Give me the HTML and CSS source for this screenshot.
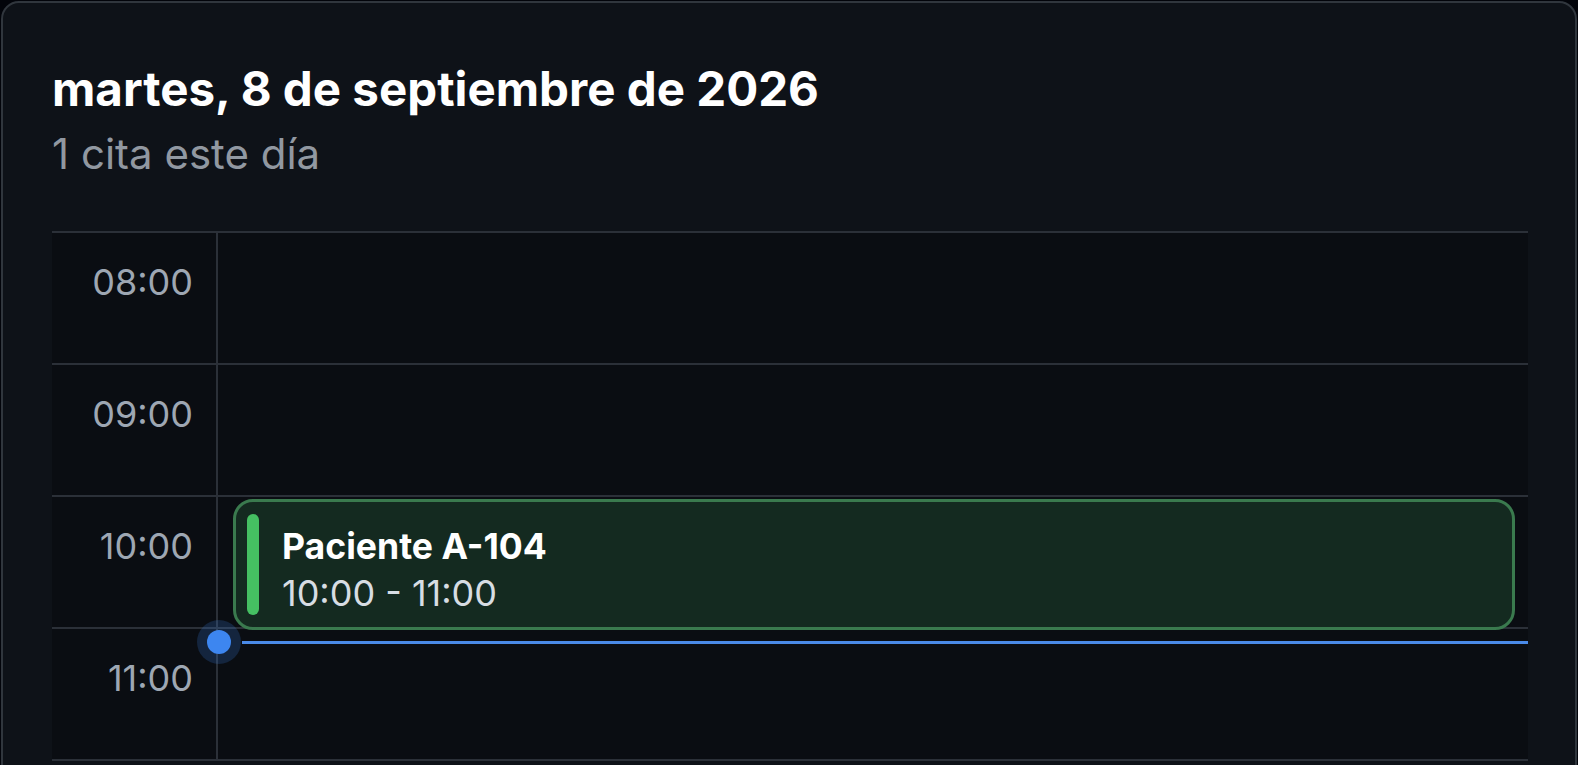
FILE: index.html
```html
<!DOCTYPE html>
<html lang="es">
<head>
  <meta charset="UTF-8">
  <meta name="viewport" content="width=device-width, initial-scale=1.0">
  <title>Agenda del día</title>
  <link rel="stylesheet" href="styles.css">
</head>
<body>
  <div class="card">
    <div class="day-header">
      <h1>martes, 8 de septiembre de 2026</h1>
      <p class="day-count">1 cita este día</p>
    </div>
    <div class="timeline">
      <div class="hour">
        <div class="hour-label">08:00</div>
        <div class="hour-cell"></div>
      </div>
      <div class="hour">
        <div class="hour-label">09:00</div>
        <div class="hour-cell"></div>
      </div>
      <div class="hour">
        <div class="hour-label">10:00</div>
        <div class="hour-cell"></div>
      </div>
      <div class="hour">
        <div class="hour-label">11:00</div>
        <div class="hour-cell"></div>
      </div>
      <div class="track">
        <div class="event" style="top: 266px; height: 131px;">
          <span class="event-bar"></span>
          <div class="event-info">
            <div class="event-title">Paciente A-104</div>
            <div class="event-time">10:00 - 11:00</div>
          </div>
        </div>
        <div class="now-line" style="top: 408px;">
          <span class="now-dot"></span>
        </div>
      </div>
    </div>
  </div>
</body>
</html>
```

FILE: styles.css
```css
* {
  margin: 0;
  padding: 0;
  box-sizing: border-box;
}
body {
  font-family: 'Inter', 'Noto Sans', sans-serif;
  background-color: #02040a;
  color: #f0f6fc;
  overflow: hidden;
}
.card {
  margin: 1px 1px 0 1px;
  min-height: 900px;
  padding: 57px 47px 0 49px;
  background-color: #0e1218;
  border: 2px solid #30363d;
  border-radius: 18px;
}
.day-header h1 {
  font-size: 47.5px;
  font-weight: 700;
  line-height: 1.2;
  color: #ffffff;
}
.day-count {
  margin-top: 12px;
  font-size: 42px;
  line-height: 1.2;
  color: #9198a1;
}
.timeline {
  position: relative;
  margin-top: 52px;
  background-color: #0a0d12;
  border-top: 2px solid #2b3038;
}
.hour {
  display: flex;
  height: 132px;
  border-bottom: 2px solid #2b3038;
}
.hour-label {
  width: 166px;
  padding: 29px 23px 0 0;
  border-right: 2px solid #2b3038;
  text-align: right;
  font-size: 36px;
  line-height: 40px;
  color: #9ea7b3;
}
.hour-cell {
  flex: 1;
}
.track {
  position: absolute;
  top: 0;
  bottom: 0;
  left: 166px;
  right: 0;
}
.event {
  position: absolute;
  left: 15px;
  right: 13px;
  display: flex;
  align-items: stretch;
  gap: 23px;
  padding: 12px 20px 12px 11px;
  background-color: #142a20;
  border: 3px solid #3a7a4e;
  border-radius: 20px;
}
.event-bar {
  width: 12px;
  border-radius: 6px;
  background-color: #45c062;
}
.event-info {
  padding-top: 10px;
}
.event-title {
  font-size: 35.6px;
  font-weight: 700;
  line-height: 46px;
  color: #ffffff;
}
.event-time {
  font-size: 36px;
  line-height: 46px;
  color: #d7dde3;
}
.now-line {
  position: absolute;
  left: 24px;
  right: 0;
  height: 3px;
  background-color: #4a8ae8;
}
.now-dot {
  position: absolute;
  left: -35px;
  top: -11px;
  width: 24px;
  height: 24px;
  border-radius: 50%;
  background-color: #3d86f0;
  box-shadow: 0 0 0 10px rgba(61, 134, 240, 0.2);
}
```
